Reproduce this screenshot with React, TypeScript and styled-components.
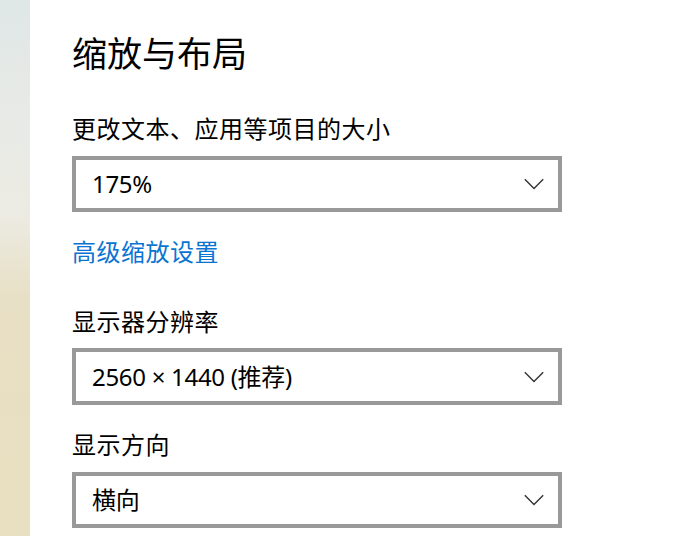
import React from "react";
import styled, { createGlobalStyle } from "styled-components";

const GlobalStyle = createGlobalStyle`
  html, body {
    margin: 0;
    padding: 0;
    background: #ffffff;
  }
  body {
    font-family: "Noto Sans", "Noto Sans CJK SC", sans-serif;
    color: #000;
  }
`;

const Page = styled.div`
  display: flex;
  width: 677px;
  height: 536px;
  overflow: hidden;
  background: #ffffff;
`;

const Strip = styled.div`
  width: 30px;
  flex: 0 0 30px;
  height: 100%;
  background: linear-gradient(
    to bottom,
    #dfe7e7 0%,
    #e7eae6 20%,
    #ecebe3 40%,
    #e8e0c6 55%,
    #e8dfc2 75%,
    #e9e0c1 100%
  );
`;

const Content = styled.div`
  display: flex;
  flex-direction: column;
  align-items: flex-start;
  padding: 34px 0 0 42px;
  flex: 1;
`;

const Title = styled.h1`
  margin: 0;
  font-family: "Noto Sans CJK SC", sans-serif;
  font-weight: 400;
  font-size: 35px;
  line-height: 35px;
  color: #000;
`;

const Label = styled.div<{ $gap: number }>`
  margin-top: ${(p) => p.$gap}px;
  font-family: "Noto Sans CJK SC", sans-serif;
  font-size: 24px;
  line-height: 24px;
  letter-spacing: 0.5px;
  color: #000;
`;

const Link = styled.a`
  margin-top: 27px;
  font-family: "Noto Sans CJK SC", sans-serif;
  font-size: 24px;
  line-height: 24px;
  letter-spacing: 0.5px;
  color: #0a74d2;
  text-decoration: none;
  cursor: pointer;
`;

const Select = styled.div<{ $gap: number; $h?: number }>`
  margin-top: ${(p) => p.$gap}px;
  box-sizing: border-box;
  width: 490px;
  height: ${(p) => p.$h ?? 56}px;
  border: 4px solid #999999;
  background: #ffffff;
  display: flex;
  align-items: center;
  justify-content: space-between;
  padding: 0 14px 0 16px;
`;

const Value = styled.span`
  font-family: "Noto Sans", "Noto Sans CJK SC", sans-serif;
  font-size: 24px;
  line-height: 24px;
  letter-spacing: -0.3px;
  color: #000;
`;

const Chevron = () => (
  <svg width="20" height="12" viewBox="0 0 20 12" aria-hidden="true">
    <path d="M0.8 1.2 L10 10.4 L19.2 1.2" fill="none" stroke="#333" strokeWidth="1.4" />
  </svg>
);

export default function App() {
  return (
    <>
      <GlobalStyle />
      <Page>
        <Strip />
        <Content>
          <Title>缩放与布局</Title>
          <Label $gap={47}>更改文本、应用等项目的大小</Label>
          <Select $gap={16}>
            <Value>175%</Value>
            <Chevron />
          </Select>
          <Link>高级缩放设置</Link>
          <Label $gap={46}>显示器分辨率</Label>
          <Select $gap={15} $h={57}>
            <Value>2560 × 1440 (推荐)</Value>
            <Chevron />
          </Select>
          <Label $gap={27}>显示方向</Label>
          <Select $gap={16}>
            <Value>横向</Value>
            <Chevron />
          </Select>
        </Content>
      </Page>
    </>
  );
}
